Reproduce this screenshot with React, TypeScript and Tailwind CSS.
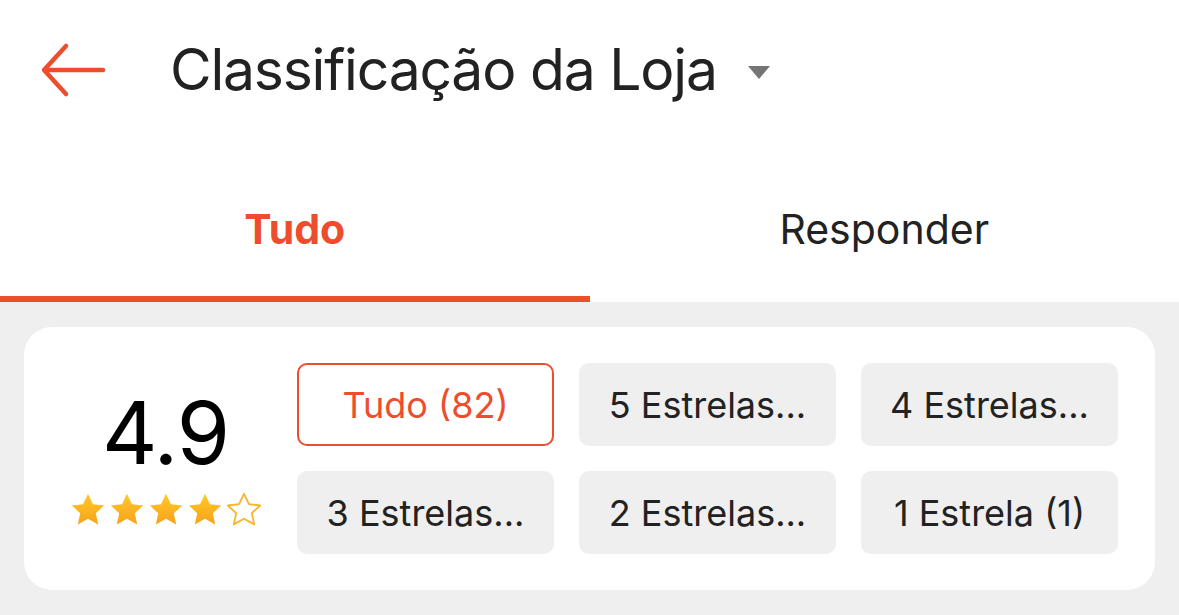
const FONT = { fontFamily: 'Inter, "Noto Sans", sans-serif' };

function Star({ filled }: { filled: boolean }) {
  return (
    <svg width="36" height="36" viewBox="0 0 24 24">
      <defs>
        <linearGradient id="starGrad" x1="0" y1="0" x2="0" y2="1">
          <stop offset="0%" stopColor="#ffc928" />
          <stop offset="100%" stopColor="#f7a21b" />
        </linearGradient>
      </defs>
      <path
        d="M12 1.2l3.3 6.9 7.5.9-5.6 5.1 1.6 7.5L12 17.8l-6.8 3.8 1.6-7.5L1.2 9l7.5-.9z"
        fill={filled ? 'url(#starGrad)' : 'none'}
        stroke={filled ? 'none' : '#f8b42a'}
        strokeWidth="1.2"
        strokeLinejoin="round"
      />
    </svg>
  );
}

const filters = [
  'Tudo (82)',
  '5 Estrelas...',
  '4 Estrelas...',
  '3 Estrelas...',
  '2 Estrelas...',
  '1 Estrela (1)',
];

export default function App() {
  return (
    <div className="flex h-[615px] w-[1179px] flex-col bg-[#efefef]" style={FONT}>
      {/* Header */}
      <div className="flex h-[140px] items-center bg-white">
        <svg className="ml-[40px]" width="66" height="56" viewBox="0 0 66 56" fill="none">
          <path
            d="M63 28H5M26 4L4 28l22 24"
            stroke="#ee4d2d"
            strokeWidth="4.5"
            strokeLinecap="round"
            strokeLinejoin="round"
          />
        </svg>
        <h1 className="ml-[64px] text-[57px] font-normal tracking-[-1.2px] text-[#222]">
          Classificação da Loja
        </h1>
        <svg className="ml-[31px] mt-1" width="22" height="13" viewBox="0 0 22 13">
          <path d="M0 0h22L11 13z" fill="#757575" />
        </svg>
      </div>

      {/* Tabs */}
      <div className="flex h-[162px] bg-white">
        <div className="flex flex-1 flex-col">
          <div className="flex flex-1 items-center justify-center pt-[24px] text-[41px] font-bold text-[#ee4d2d]">
            Tudo
          </div>
          <div className="h-[6px] bg-[#ee4d2d]" />
        </div>
        <div className="flex flex-1 flex-col">
          <div className="flex flex-1 items-center justify-center pt-[24px] text-[41px] text-[#222]">
            Responder
          </div>
          <div className="h-[6px]" />
        </div>
      </div>

      {/* Rating card */}
      <div className="mx-[24px] mt-[25px] flex h-[263px] items-center rounded-[28px] bg-white">
        <div className="flex w-[273px] flex-col items-center pl-[10px]">
          <div className="text-[86px] leading-none tracking-[-1px] text-black">4.9</div>
          <div className="mt-[16px] flex gap-[3px]">
            {[0, 1, 2, 3, 4].map((i) => (
              <Star key={i} filled={i < 4} />
            ))}
          </div>
        </div>
        <div className="grid grid-cols-3 gap-x-[25px] gap-y-[25px]">
          {filters.map((f, i) => (
            <div
              key={f}
              className={
                i === 0
                  ? 'flex h-[83px] w-[257px] items-center justify-center rounded-[10px] border-2 border-[#ee4d2d] bg-white text-[36px] text-[#ee4d2d]'
                  : 'flex h-[83px] w-[257px] items-center justify-center rounded-[10px] bg-[#efefef] text-[36px] text-[#222]'
              }
            >
              {f}
            </div>
          ))}
        </div>
      </div>
    </div>
  );
}
